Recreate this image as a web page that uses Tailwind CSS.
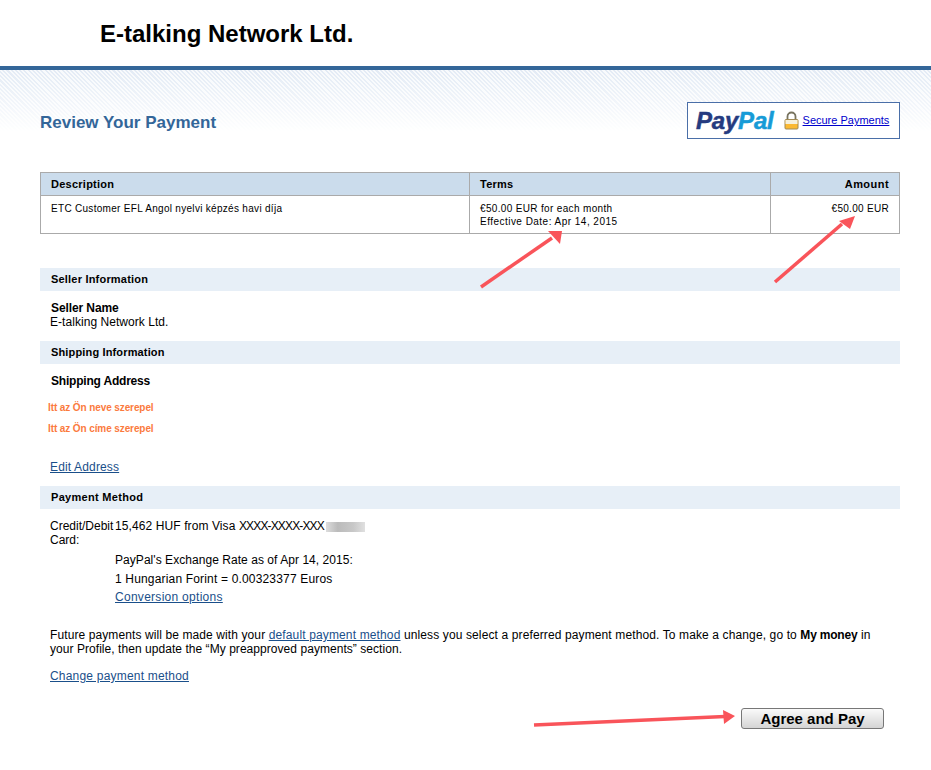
<!DOCTYPE html>
<html><head><meta charset="utf-8"><script src="https://cdn.jsdelivr.net/npm/@tailwindcss/browser@4"></script></head>
<body class="bg-white">
<div class="relative w-[931px] h-[770px] overflow-hidden bg-white font-['Liberation_Sans',Arial,sans-serif] text-black text-[12px]">
  <header class="h-[66px] pl-[100px] pt-[19px] text-[24px] leading-[30px] font-bold">E-talking Network Ltd.</header>
  <div class="h-[4px] bg-[#369]"></div>
  <div class="relative h-[62px]">
    <div class="absolute inset-0 bg-[repeating-linear-gradient(45deg,#e3ebf5_0px,#e3ebf5_1.5px,#f8fafc_1.5px,#f8fafc_3px)] [mask-image:linear-gradient(to_bottom,black,transparent)]"></div>
  </div>
  <main class="absolute left-[40px] top-[70px] w-[860px]">
    <div class="flex justify-between items-start h-[102px] pt-[32px]">
      <h1 class="pt-[10px] text-[17px] leading-[22px] font-bold text-[#369]">Review Your Payment</h1>
      <div class="flex items-center w-[213px] h-[37px] border border-[#4a6fa8] bg-white pl-[8px]">
        <span class="text-[24px] leading-[30px] font-bold italic tracking-[-0.2px] [-webkit-text-stroke:0.5px] text-[#253b80]">Pay<span class="text-[#179bd7]">Pal</span></span>
        <svg class="ml-[10px] mr-[4px]" width="15" height="19" viewBox="0 0 15 19"><path d="M3.500 9V5.500a4 4 0 0 1 8 0V9" fill="none" stroke="#77735f" stroke-width="1.800"/><rect x="1" y="8.500" width="13" height="9.500" rx="1" fill="#fbb932" stroke="#a08a55"/><rect x="1.500" y="9" width="12" height="4" fill="#f5f0dc"/></svg>
        <a class="text-[11px] text-[#0000cc] underline">Secure Payments</a>
      </div>
    </div>
    <div class="border border-[#aaa] w-[860px]">
      <div class="flex h-[23px] bg-[#cbdcec] border-b border-[#aaa] font-bold text-[11px] leading-[23px] tracking-[0.25px]">
        <div class="w-[428px] pl-[10px]">Description</div>
        <div class="w-[301px] pl-[10px] border-l border-[#aaa]">Terms</div>
        <div class="flex-1 pr-[10px] text-right border-l border-[#aaa] tracking-[0.45px]">Amount</div>
      </div>
      <div class="flex h-[37px] text-[10px] leading-[13px] tracking-[0.3px]">
        <div class="w-[428px] pl-[10px] pt-[6px]">ETC Customer EFL Angol nyelvi képzés havi díja</div>
        <div class="w-[301px] pl-[10px] pt-[6px] border-l border-[#aaa]"><span class="tracking-[0.34px]">€50.00 EUR for each month</span><br><span class="tracking-[0.47px]">Effective Date: Apr 14, 2015</span></div>
        <div class="flex-1 pr-[10px] pt-[6px] text-right border-l border-[#aaa]">€50.00 EUR</div>
      </div>
    </div>
    <div class="mt-[34px] h-[23px] bg-[#e7eff7] pl-[11px] font-bold text-[11px] leading-[23px] tracking-[0.2px]">Seller Information</div>
    <div class="h-[50px] pl-[10px] pt-[10px] text-[12px] leading-[14px]">
      <div class="font-bold pl-[1px] tracking-[-0.1px]">Seller Name</div>
      <div class="tracking-[0.05px]">E-talking Network Ltd.</div>
    </div>
    <div class="h-[23px] bg-[#e7eff7] pl-[11px] font-bold text-[11px] leading-[23px] tracking-[0.15px]">Shipping Information</div>
    <div class="h-[122px] pl-[10px] pt-[10px] leading-[14px]">
      <div class="font-bold pl-[1px] tracking-[-0.2px]">Shipping Address</div>
      <div class="ml-[-2px] mt-[13px] text-[10px] leading-[14px] font-bold tracking-[-0.1px] text-[#fb7a3e]">Itt az Ön neve szerepel</div>
      <div class="ml-[-2px] mt-[7px] text-[10px] leading-[14px] font-bold tracking-[-0.1px] text-[#fb7a3e]">Itt az Ön címe szerepel</div>
      <a class="block mt-[24px] text-[#1a4f8a] underline tracking-[0.15px]">Edit Address</a>
    </div>
    <div class="h-[23px] bg-[#e7eff7] pl-[11px] font-bold text-[11px] leading-[23px] tracking-[0.3px]">Payment Method</div>
    <div class="flex pl-[10px] pt-[10px] leading-[14px]">
      <div class="w-[65px]">Credit/Debit Card:</div>
      <div>
        <div class="flex items-center h-[14px]"><span class="tracking-[0.1px]">15,462 HUF from Visa <span class="tracking-[-0.85px]">XXXX-XXXX-XXX</span></span><span class="ml-[2px] w-[39px] h-[10px] mt-[1px] bg-[linear-gradient(to_right,#ddd,#bbb_30%,#c8c8c8_70%,#e0e0e0)]"></span></div>
        <div class="mt-[20px] tracking-[0.05px]">PayPal's Exchange Rate as of Apr 14, 2015:</div>
        <div class="mt-[5px] tracking-[0.17px]">1 Hungarian Forint = 0.00323377 Euros</div>
        <a class="block mt-[4px] text-[#1a4f8a] underline tracking-[0.28px]">Conversion options</a>
      </div>
    </div>
    <p class="mt-[24px] pl-[10px] leading-[14px] w-[860px] tracking-[0.1px]">Future payments will be made with your <a class="text-[#1a4f8a] underline tracking-[0.14px]">default payment method</a> <span class="tracking-[0.12px]">unless you select a preferred payment method. To make a change, go to</span> <b class="tracking-[-0.2px]">My money</b> <span class="tracking-[0.18px]">in</span><br><span class="tracking-[0.05px]">your Profile, then update the “My preapproved payments” section.</span></p>
    <a class="block mt-[13px] ml-[10px] leading-[14px] text-[#1a4f8a] underline tracking-[0.2px]">Change payment method</a>
    <div class="flex justify-end pr-[16px] mt-[25px]">
      <button class="w-[143px] h-[21px] rounded-[3px] border border-[#777] bg-[linear-gradient(to_bottom,#fafafa,#d4d4d4)] font-bold text-[15px] leading-[18px] text-black">Agree and Pay</button>
    </div>
  </main>
  <svg class="absolute left-0 top-0 pointer-events-none" width="931" height="770" viewBox="0 0 931 770">
    <g stroke="#f9545a" stroke-width="3.500" fill="#f9545a">
      <line x1="481" y1="287" x2="552" y2="238"/>
      <line x1="775" y1="282" x2="842" y2="224"/>
      <line x1="534" y1="725" x2="725" y2="716.500"/>
    </g>
    <g fill="#f9545a">
      <polygon points="562,231 548,231 560,244"/>
      <polygon points="855,216 839,221 850,229"/>
      <polygon points="735,716 723,710 724,724"/>
    </g>
  </svg>
</div>
</body></html>
